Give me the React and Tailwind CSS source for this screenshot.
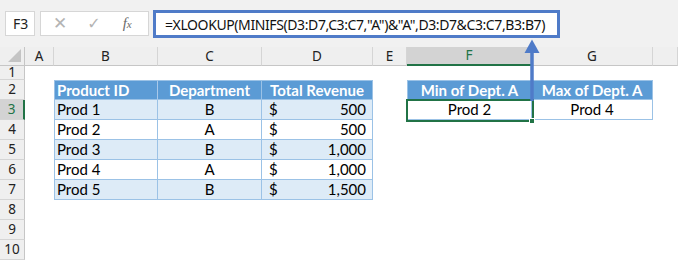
import React from 'react';

const colClasses = {
  A: 'w-[29px]',
  B: 'w-[104px]',
  C: 'w-[104px]',
  D: 'w-[111px]',
  E: 'w-[34px]',
  F: 'w-[125px]',
  G: 'w-[121px]',
  H: 'w-[25px]',
};
const colKeys = ['A', 'B', 'C', 'D', 'E', 'F', 'G', 'H'];

const products = [
  { id: 'Prod 1', dept: 'B', rev: '500' },
  { id: 'Prod 2', dept: 'A', rev: '500' },
  { id: 'Prod 3', dept: 'B', rev: '1,000' },
  { id: 'Prod 4', dept: 'A', rev: '1,000' },
  { id: 'Prod 5', dept: 'B', rev: '1,500' },
];

const ui = "font-['Noto_Sans','Open_Sans',sans-serif]";
const cellFont = "font-['Lato','Carlito',sans-serif] text-[15px] text-black";

function RowHeader({ n, active }) {
  return (
    <div
      className={`w-[25px] shrink-0 h-full flex items-center justify-center text-[13.5px] ${ui} border-b border-[#d5d5d5] ${
        active
          ? 'bg-[#d3d3d3] text-[#217346] border-r-2 border-r-[#217346]'
          : 'bg-[#efefef] text-[#222] border-r border-r-[#c6c6c6]'
      }`}
    >
      {n}
    </div>
  );
}

function Cell({ col, className = '', children }) {
  return <div className={`${colClasses[col]} shrink-0 h-full ${className}`}>{children}</div>;
}

function SheetRow({ n, h, active, children }) {
  return (
    <div className={`flex ${h}`}>
      <RowHeader n={n} active={active} />
      {children}
    </div>
  );
}

export default function App() {
  return (
    <div className="w-[678px] h-[260px] overflow-hidden bg-white relative">
      {/* Formula bar */}
      <div className="h-[47px] bg-[#f1f1f1] flex items-start pt-[10px]">
        <div className={`ml-[5px] mt-[1px] w-[30px] h-[25px] bg-white border border-[#d6d6d6] flex items-center pl-[7px] text-[14px] text-[#222] ${ui}`}>
          F3
        </div>
        <div className="ml-[5px] mt-[1px] w-[109px] h-[25px] bg-white border border-[#d6d6d6] flex items-center">
          <span className="ml-[12px] text-[#b4b4b4] text-[17px] leading-none font-['DejaVu_Sans',sans-serif]">✕</span>
          <span className="ml-[20px] text-[#b4b4b4] text-[16px] leading-none font-['DejaVu_Sans',sans-serif]">✓</span>
          <span className="ml-[22px] text-[#6a6a6a] text-[15px] italic leading-none font-['Liberation_Serif',serif]">
            f<span className="text-[11px]">x</span>
          </span>
        </div>
        <div className={`ml-[4px] w-[407px] h-[28px] bg-white border-[3px] border-[#4f7bc8] flex items-center pl-[9px] text-[14px] tracking-[-0.4px] text-[#111] whitespace-nowrap overflow-hidden ${ui}`}>
          =XLOOKUP(MINIFS(D3:D7,C3:C7,"A")&"A",D3:D7&C3:C7,B3:B7)
        </div>
      </div>

      {/* Column headers */}
      <div className={`flex h-[19px] text-[13.5px] ${ui}`}>
        <div className="w-[25px] shrink-0 h-full bg-[#efefef] border-r border-b border-[#c6c6c6] relative">
          <div className="absolute right-[3px] bottom-[3px] w-0 h-0 border-l-[13px] border-l-transparent border-b-[13px] border-b-[#c4c4c4]" />
        </div>
        {colKeys.map((k) =>
          k === 'F' ? (
            <div
              key={k}
              className={`${colClasses[k]} shrink-0 h-full bg-[#d3d3d3] text-[#217346] border-r border-r-[#c6c6c6] border-b-2 border-b-[#217346] flex items-center justify-center`}
            >
              {k}
            </div>
          ) : (
            <div
              key={k}
              className={`${colClasses[k]} shrink-0 h-full bg-[#efefef] text-[#222] border-r border-r-[#d5d5d5] border-b border-b-[#c6c6c6] flex items-center justify-center`}
            >
              {k === 'H' ? '' : k}
            </div>
          )
        )}
      </div>

      {/* Row 1 */}
      <SheetRow n={1} h="h-[14px]" />

      {/* Row 2: headers */}
      <SheetRow n={2} h="h-[20px]">
        <Cell col="A" />
        <Cell col="B" className={`bg-[#5b9bd5] border border-[#9bc2e6] border-r-[#a9c9ea] flex items-center pl-[2px] font-bold !text-white ${cellFont}`}>
          Product ID
        </Cell>
        <Cell col="C" className={`bg-[#5b9bd5] border-y border-r border-[#9bc2e6] flex items-center justify-center font-bold !text-white ${cellFont}`}>
          Department
        </Cell>
        <Cell col="D" className={`bg-[#5b9bd5] border-y border-r border-[#9bc2e6] flex items-center justify-center font-bold !text-white ${cellFont}`}>
          Total Revenue
        </Cell>
        <Cell col="E" />
        <Cell col="F" className={`bg-[#5b9bd5] border border-[#9bc2e6] flex items-center justify-center font-bold !text-white ${cellFont}`}>
          Min of Dept. A
        </Cell>
        <Cell col="G" className={`bg-[#5b9bd5] border-y border-r border-[#9bc2e6] flex items-center justify-center font-bold !text-white ${cellFont}`}>
          Max of Dept. A
        </Cell>
      </SheetRow>

      {/* Rows 3-7: data */}
      {products.map((p, i) => {
        const bg = i % 2 === 0 ? 'bg-[#ddebf7]' : 'bg-white';
        return (
          <SheetRow key={p.id} n={i + 3} h="h-[20px]" active={i === 0}>
            <Cell col="A" />
            <Cell col="B" className={`${bg} border-x border-b border-[#9bc2e6] flex items-center pl-[2px] ${cellFont}`}>
              {p.id}
            </Cell>
            <Cell col="C" className={`${bg} border-r border-b border-[#9bc2e6] flex items-center justify-center ${cellFont}`}>
              {p.dept}
            </Cell>
            <Cell col="D" className={`${bg} border-r border-b border-[#9bc2e6] flex items-center justify-between pl-[7px] pr-[6px] ${cellFont}`}>
              <span>$</span>
              <span>{p.rev}</span>
            </Cell>
            {i === 0 && (
              <>
                <Cell col="E" />
                <Cell col="F" className={`bg-white border-x border-b border-[#9bc2e6] flex items-center justify-center ${cellFont}`}>
                  Prod 2
                </Cell>
                <Cell col="G" className={`bg-white border-r border-b border-[#9bc2e6] flex items-center justify-center ${cellFont}`}>
                  Prod 4
                </Cell>
              </>
            )}
          </SheetRow>
        );
      })}

      <SheetRow n={8} h="h-[20px]" />
      <SheetRow n={9} h="h-[20px]" />
      <SheetRow n={10} h="h-[20px]" />

      {/* Active cell selection on F3 */}
      <div className="absolute left-[406px] top-[99px] w-[128px] h-[23px] border-2 border-[#217346]" />
      <div className="absolute left-[529px] top-[118px] w-[6px] h-[6px] bg-[#217346] border border-white" />

      {/* Arrow from formula to result */}
      <svg className="absolute left-[524px] top-[38px]" width="16" height="63" viewBox="0 0 16 63">
        <line x1="8" y1="12" x2="8" y2="63" stroke="#4f7bc8" strokeWidth="3.5" />
        <polygon points="0.5,15 8,1.5 15.5,15" fill="#4f7bc8" />
      </svg>
    </div>
  );
}
